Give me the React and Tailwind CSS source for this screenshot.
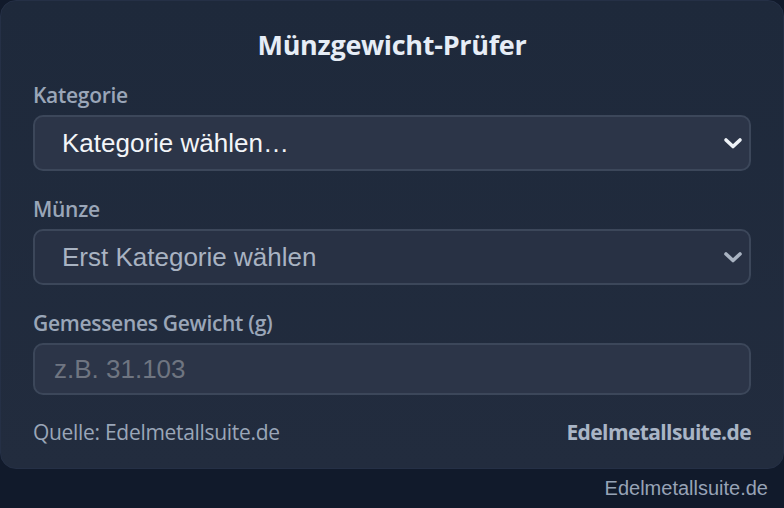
import React from "react";

const ui = { fontFamily: '"Open Sans", "Noto Sans", sans-serif' };
const arial = { fontFamily: '"Liberation Sans", Arial, sans-serif' };

function Chevron({ color }) {
  return (
    <svg width="20" height="14" viewBox="0 0 20 14" className="absolute right-[6px] top-1/2 -translate-y-1/2">
      <path d="M3 4 L10 10.5 L17 4" fill="none" stroke={color} strokeWidth="3.6" strokeLinecap="round" strokeLinejoin="round" />
    </svg>
  );
}

function Label({ children }) {
  return (
    <div className="text-[21px] leading-[24px] font-semibold text-[#9aa6b8] mb-2 tracking-[-0.3px]" style={ui}>
      {children}
    </div>
  );
}

export default function App() {
  return (
    <div className="w-[784px] h-[508px] bg-[#111a2b] flex flex-col overflow-hidden">
      <div className="rounded-2xl bg-gradient-to-b from-[#1e293b] to-[#222c3e] border border-[#253046] pt-[28px] pb-[23px] px-8 flex flex-col">
        <h1 className="text-center text-[27px] leading-[32px] font-bold text-[#e6edf6] mb-[22px] tracking-[-0.3px]" style={ui}>
          Münzgewicht-Prüfer
        </h1>

        <Label>Kategorie</Label>
        <div className="relative h-[56px] rounded-[10px] border-2 border-[#3c475a] bg-[#2c3548] flex items-center pl-[27px] mb-[26px]">
          <span className="text-[26px] text-[#f3f5f8]" style={arial}>Kategorie wählen…</span>
          <Chevron color="#eef2f7" />
        </div>

        <Label>Münze</Label>
        <div className="relative h-[56px] rounded-[10px] border-2 border-[#3c475a] bg-[#283144] flex items-center pl-[27px] mb-[26px]">
          <span className="text-[26px] text-[#a9b3c2]" style={arial}>Erst Kategorie wählen</span>
          <Chevron color="#a9b3c2" />
        </div>

        <Label>Gemessenes Gewicht (g)</Label>
        <div className="h-[52px] rounded-[10px] border-2 border-[#3c475a] bg-[#2c3548] flex items-center pl-[19px] mb-[26px]">
          <span className="text-[26px] text-[#6f7581]" style={arial}>z.B. 31.103</span>
        </div>

        <div className="flex items-center justify-between h-[24px]" style={ui}>
          <span className="text-[21px] text-[#9aa6b8] tracking-[-0.3px]">Quelle: Edelmetallsuite.de</span>
          <span className="text-[21px] font-bold text-[#a9b5c6] tracking-[-0.6px]">Edelmetallsuite.de</span>
        </div>
      </div>
      <div className="flex justify-end pr-[16px] mt-[7px]">
        <span className="text-[20px] leading-[24px] text-[#97a3b6]" style={arial}>Edelmetallsuite.de</span>
      </div>
    </div>
  );
}
